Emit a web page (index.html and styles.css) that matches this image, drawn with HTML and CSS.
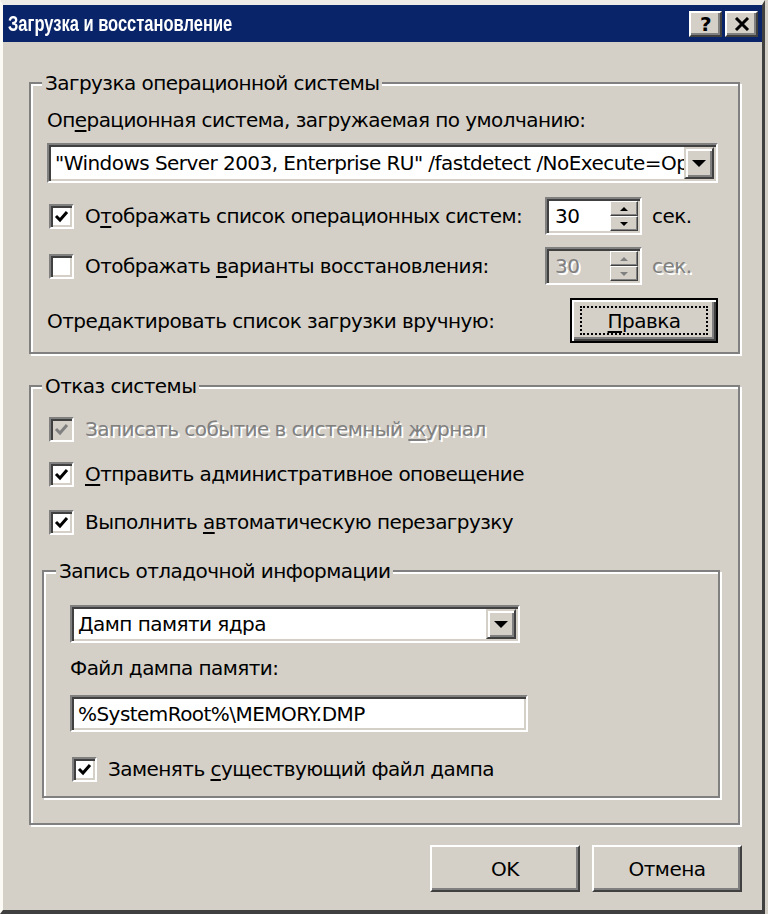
FILE: index.html
```html
<!DOCTYPE html>
<html lang="ru">
<head>
    <meta charset="UTF-8">
    <meta name="viewport" content="width=device-width, initial-scale=1.0">
    <title>Загрузка и восстановление</title>
    <link rel="stylesheet" href="styles.css">
</head>
<body>
    <div class="window">
        <div class="titlebar">
            <span class="title">Загрузка и восстановление</span>
            <div class="title-buttons">
                <span class="tbtn">?</span>
                <span class="tbtn">
                    <svg width="16" height="14" viewBox="0 0 16 14"><path d="M2 1L14 13M14 1L2 13" stroke="#000" stroke-width="3"/></svg>
                </span>
            </div>
        </div>

        <div class="content">
            <fieldset class="group group-boot">
                <legend>Загрузка операционной системы</legend>
                <div class="group-body">
                    <div class="label-line first">Оп<u>е</u>рационная система, загружаемая по умолчанию:</div>

                    <div class="combo combo-os">
                        <span class="combo-text">"Windows Server 2003, Enterprise RU" /fastdetect /NoExecute=OptOut</span>
                        <span class="drop-btn">
                            <svg width="14" height="7" viewBox="0 0 14 7"><path d="M0 0h14L7 7z"/></svg>
                        </span>
                    </div>

                    <div class="row row-list">
                        <label class="check">
                            <span class="box">
                                <svg width="17" height="17" viewBox="0 0 17 17"><path d="M3 8l4 4 7-8" fill="none" stroke="#000" stroke-width="3"/></svg>
                            </span>
                            <span>О<u>т</u>ображать список операционных систем:</span>
                        </label>
                        <div class="spin">
                            <span class="spin-val">30</span>
                            <span class="spin-btns">
                                <span class="spin-btn"><svg width="8" height="4" viewBox="0 0 8 4"><path d="M0 4h8L4 0z"/></svg></span>
                                <span class="spin-btn"><svg width="8" height="4" viewBox="0 0 8 4"><path d="M0 0h8L4 4z"/></svg></span>
                            </span>
                        </div>
                        <span class="unit">сек.</span>
                    </div>

                    <div class="row row-recovery">
                        <label class="check">
                            <span class="box"></span>
                            <span>Отображать <u>в</u>арианты восстановления:</span>
                        </label>
                        <div class="spin disabled">
                            <span class="spin-val">30</span>
                            <span class="spin-btns">
                                <span class="spin-btn"><svg width="8" height="4" viewBox="0 0 8 4"><path d="M0 4h8L4 0z"/></svg></span>
                                <span class="spin-btn"><svg width="8" height="4" viewBox="0 0 8 4"><path d="M0 0h8L4 4z"/></svg></span>
                            </span>
                        </div>
                        <span class="unit disabled-text">сек.</span>
                    </div>

                    <div class="row row-edit">
                        <span>Отредактировать список загрузки вручную:</span>
                        <span class="btn btn-default"><span class="focus"><u>П</u>равка</span></span>
                    </div>
                </div>
            </fieldset>

            <fieldset class="group group-failure">
                <legend>Отказ системы</legend>
                <div class="group-body">
                    <label class="check row-log disabled-text">
                        <span class="box box-disabled">
                            <svg width="17" height="17" viewBox="0 0 17 17"><path d="M3 8l4 4 7-8" fill="none" stroke="#808080" stroke-width="3"/></svg>
                        </span>
                        <span>Записать событие в системный <u>ж</u>урнал</span>
                    </label>

                    <label class="check row-alert">
                        <span class="box">
                            <svg width="17" height="17" viewBox="0 0 17 17"><path d="M3 8l4 4 7-8" fill="none" stroke="#000" stroke-width="3"/></svg>
                        </span>
                        <span><u>О</u>тправить административное оповещение</span>
                    </label>

                    <label class="check row-reboot">
                        <span class="box">
                            <svg width="17" height="17" viewBox="0 0 17 17"><path d="M3 8l4 4 7-8" fill="none" stroke="#000" stroke-width="3"/></svg>
                        </span>
                        <span>Выполнить <u>а</u>втоматическую перезагрузку</span>
                    </label>

                    <fieldset class="group group-debug">
                        <legend>Запись отладочной информации</legend>
                        <div class="group-body">
                            <div class="combo combo-dump">
                                <span class="combo-text">Дамп памяти ядра</span>
                                <span class="drop-btn">
                                    <svg width="14" height="7" viewBox="0 0 14 7"><path d="M0 0h14L7 7z"/></svg>
                                </span>
                            </div>
                            <div class="label-line dump-label">Файл дампа памяти:</div>
                            <div class="textbox">%SystemRoot%\MEMORY.DMP</div>
                            <label class="check row-overwrite">
                                <span class="box">
                                    <svg width="17" height="17" viewBox="0 0 17 17"><path d="M3 8l4 4 7-8" fill="none" stroke="#000" stroke-width="3"/></svg>
                                </span>
                                <span>Заменять <u>с</u>уществующий файл дампа</span>
                            </label>
                        </div>
                    </fieldset>
                </div>
            </fieldset>

            <div class="dialog-buttons">
                <span class="btn btn-dialog">OK</span>
                <span class="btn btn-dialog">Отмена</span>
            </div>
        </div>
    </div>
</body>
</html>
```

FILE: styles.css
```css
body {
    margin: 0;
    background-color: #d4d0c8;
    font-family: "DejaVu Sans", Tahoma, sans-serif;
    font-size: 20px;
    letter-spacing: -0.55px;
    color: #000;
}

u {
    text-decoration-thickness: 2px;
    text-underline-offset: 3px;
}

.window {
    width: 765px;
    height: 914px;
    box-sizing: border-box;
    border-style: solid;
    border-width: 5px 3px 4px 3px;
    border-color: #eeece6 #404040 #404040 #fbfaf5;
    background-color: #d4d0c8;
    display: flex;
    flex-direction: column;
}

/* title bar */
.titlebar {
    height: 37px;
    flex-shrink: 0;
    background-color: #0a246a;
    color: #fff;
    display: flex;
    align-items: center;
    justify-content: space-between;
    padding: 0 4px 0 5px;
}

.title {
    font-family: "Liberation Sans Narrow", "Liberation Sans", sans-serif;
    font-weight: bold;
    font-size: 22px;
    letter-spacing: 0;
    transform: scaleX(0.75);
    transform-origin: left center;
}

.title-buttons {
    display: flex;
    gap: 3px;
}

.tbtn {
    width: 33px;
    height: 26px;
    box-sizing: border-box;
    background-color: #d4d0c8;
    border: 2px solid;
    border-color: #fff #404040 #404040 #fff;
    box-shadow: inset -2px -2px 0 #808080;
    display: flex;
    align-items: center;
    justify-content: center;
    color: #000;
    font-weight: bold;
    font-size: 20px;
}

/* dialog content */
.content {
    flex: 1;
    padding: 28px 22px 0 26px;
    display: flex;
    flex-direction: column;
}

.group {
    margin: 0;
    padding: 0 20px 9px 16px;
    min-width: 0;
    border: 2px solid #808080;
    box-shadow: inset 2px 2px 0 #fff, 2px 2px 0 #fff;
}

.group legend {
    padding: 0 3px;
    margin-left: -5px;
    line-height: 26px;
    background-color: #d4d0c8;
}

.group-body {
    display: flex;
    flex-direction: column;
}

.label-line {
    line-height: 26px;
}

.label-line.first {
    margin-top: 11px;
}

.row {
    display: flex;
    align-items: center;
}

.row-list {
    margin-top: 14px;
}

.row-recovery {
    margin-top: 12px;
}

.row-edit {
    margin-top: 13px;
}

.check {
    display: flex;
    align-items: center;
    gap: 11px;
    line-height: 26px;
}

.row .check {
    flex: 1;
}

.box {
    width: 25px;
    height: 25px;
    margin-left: 2px;
    box-sizing: border-box;
    flex-shrink: 0;
    background-color: #fff;
    border: 2px solid;
    border-color: #808080 #fff #fff #808080;
    box-shadow: inset 2px 2px 0 #404040, inset -2px -2px 0 #d4d0c8;
    display: flex;
    align-items: center;
    justify-content: center;
}

.box-disabled {
    background-color: #d4d0c8;
}

.disabled-text {
    color: #808080;
    text-shadow: 2px 2px 0 #fff;
}

/* combo boxes and edit fields */
.combo, .spin, .textbox {
    box-sizing: border-box;
    background-color: #fff;
    border: 2px solid;
    border-color: #808080 #fff #fff #808080;
    box-shadow: inset 2px 2px 0 #404040, inset -2px -2px 0 #d4d0c8;
    padding: 2px;
    display: flex;
    align-items: stretch;
}

.combo-os {
    height: 40px;
    margin-top: 10px;
}

.combo-text {
    flex: 1;
    overflow: hidden;
    white-space: nowrap;
    padding-left: 4px;
    display: flex;
    align-items: center;
}

.drop-btn {
    width: 30px;
    flex-shrink: 0;
    box-sizing: border-box;
    background-color: #d4d0c8;
    border: 2px solid;
    border-color: #d4d0c8 #404040 #404040 #d4d0c8;
    box-shadow: inset 2px 2px 0 #fff, inset -2px -2px 0 #808080;
    display: flex;
    align-items: center;
    justify-content: center;
}

.spin {
    width: 97px;
    height: 38px;
}

.spin-val {
    flex: 1;
    padding-left: 6px;
    display: flex;
    align-items: center;
}

.spin-btns {
    width: 28px;
    display: flex;
    flex-direction: column;
}

.spin-btn {
    flex: 1;
    box-sizing: border-box;
    background-color: #d4d0c8;
    border: 1px solid;
    border-color: #fff #404040 #404040 #fff;
    box-shadow: inset -1px -1px 0 #808080;
    display: flex;
    align-items: center;
    justify-content: center;
}

.spin.disabled {
    background-color: #d4d0c8;
}

.spin.disabled .spin-val {
    color: #808080;
    text-shadow: 2px 2px 0 #fff;
}

.spin.disabled svg {
    fill: #808080;
}

.unit {
    width: 66px;
    margin-left: 10px;
}

/* buttons */
.btn {
    box-sizing: border-box;
    background-color: #d4d0c8;
    display: flex;
    align-items: center;
    justify-content: center;
}

.btn-default {
    margin-left: auto;
    width: 148px;
    height: 45px;
    border: 2px solid #000;
    box-shadow: inset 2px 2px 0 #fff, inset -2px -2px 0 #404040, inset -4px -4px 0 #808080;
    padding: 6px 8px;
}

.focus {
    flex: 1;
    align-self: stretch;
    border: 2px dotted #000;
    display: flex;
    align-items: center;
    justify-content: center;
}

.group-failure {
    margin-top: 19px;
    padding-bottom: 25px;
}

.row-log {
    margin-top: 17px;
}

.row-alert {
    margin-top: 19px;
}

.row-reboot {
    margin-top: 22px;
}

.group-debug {
    margin: 23px -2px 0 -5px;
    padding: 0 20px 14px 26px;
}

.group-debug legend {
    margin-left: -14px;
}

.combo-dump {
    width: 450px;
    height: 38px;
    margin-top: 21px;
}

.dump-label {
    margin-top: 12px;
}

.textbox {
    width: 458px;
    height: 37px;
    margin-top: 14px;
    padding-left: 6px;
    align-items: center;
}

.row-overwrite {
    margin-top: 24px;
}

.dialog-buttons {
    margin: 20px -2px 0 0;
    display: flex;
    justify-content: flex-end;
    gap: 12px;
}

.btn-dialog {
    width: 150px;
    height: 47px;
    border: 2px solid;
    border-color: #fff #404040 #404040 #fff;
    box-shadow: inset -2px -2px 0 #808080;
}
```
